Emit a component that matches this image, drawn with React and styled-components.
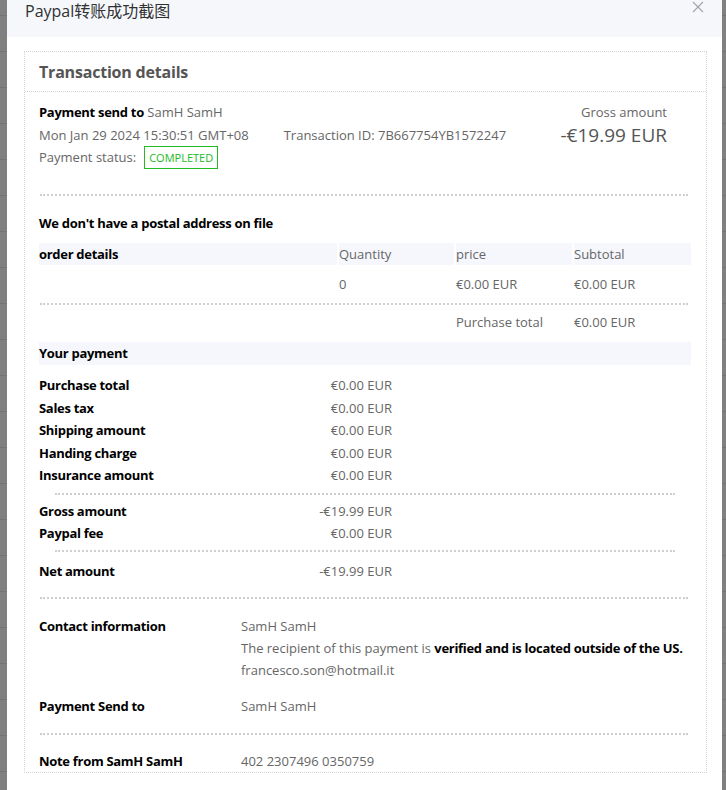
import React from "react";
import styled, { createGlobalStyle } from "styled-components";

const Global = createGlobalStyle`
  html, body { margin: 0; padding: 0; height: 100%; overflow: hidden; }
  body {
    background: #808080 repeating-linear-gradient(to bottom, transparent 0, transparent 15px, #747474 15px, #747474 16px, transparent 16px, transparent 36px);
    font-family: "Open Sans", "Noto Sans", "Noto Sans CJK SC", sans-serif;
    font-size: 13px;
    color: #666;
  }
`;

const Modal = styled.div`
  margin-left: 7px;
  width: 715px;
  height: 790px;
  background: #fff;
  box-sizing: border-box;
`;

const Header = styled.div`
  height: 37px;
  background: #f5f7fa;
  display: flex;
  justify-content: space-between;
  align-items: flex-start;
  padding: 0 18px 0 18px;
  box-sizing: border-box;
`;

const Title = styled.div`
  font-size: 16px;
  line-height: 22px;
  color: #303133;
  font-family: "Open Sans", "Noto Sans CJK SC", sans-serif;
`;

const Close = styled.div`
  padding-top: 1px;
  line-height: 0;
`;

const Body = styled.div`
  padding: 14px 15px 0 17px;
`;

const Card = styled.div`
  border: 1px dotted #d5d5d5;
  height: 722px;
  box-sizing: border-box;
  overflow: hidden;
`;

const CardHead = styled.div`
  height: 39px;
  display: flex;
  align-items: center;
  padding-left: 14px;
  font-size: 16px;
  font-weight: 700;
  color: #555;
  border-bottom: 1px dotted #d5d5d5;
  letter-spacing: -0.2px;
`;

const CardBody = styled.div`
  padding: 0 15px 0 14px;
`;

const Top = styled.div`
  display: flex;
  justify-content: space-between;
  padding-top: 9px;
  height: 93px;
  box-sizing: content-box;
`;

const Line = styled.div`
  line-height: 22.5px;
  display: flex;
  align-items: center;
  justify-content: ${(p) => (p.$end ? "flex-end" : "flex-start")};
  gap: ${(p) => p.$gap || 0}px;
`;

const Strong = styled.span`
  font-weight: 700;
  color: #000;
  letter-spacing: -0.3px;
`;

const Badge = styled.span`
  display: inline-block;
  border: 1px solid #22bb22;
  color: #22bb22;
  font-size: 11px;
  line-height: 21px;
  padding: 0 4px;
  margin-left: 8px;
`;

const Right = styled.div`
  text-align: right;
  padding-right: 24px;
`;

const Big = styled.div`
  font-size: 19px;
  line-height: 22px;
  color: #555;
`;

const Dots = styled.div`
  border-top: 2px dotted #cfcfcf;
  margin: ${(p) => p.$m || "0 3px 0 1px"};
`;

const SectionTitle = styled.div`
  font-weight: 700;
  color: #000;
  letter-spacing: -0.3px;
  line-height: ${(p) => (p.$shade ? "21px" : "22px")};
  padding: ${(p) => p.$pad || "0"};
  margin-top: ${(p) => p.$mt || 0}px;
  background: ${(p) => (p.$shade ? "#f6f7fd" : "transparent")};
`;

const OrderGrid = styled.div`
  display: grid;
  grid-template-columns: 298px 115px 116px 1fr;
  column-gap: 2px;
  align-items: center;
`;

const HeadCell = styled.div`
  background: #f6f7fd;
  line-height: 22px;
  color: ${(p) => (p.$bold ? "#000" : "#666")};
  font-weight: ${(p) => (p.$bold ? 700 : 400)};
  letter-spacing: ${(p) => (p.$bold ? "-0.3px" : "0")};
`;

const Cell = styled.div`
  line-height: ${(p) => p.$h || 38}px;
  min-height: ${(p) => p.$h || 38}px;
  color: #666;
`;

const PayList = styled.div`
  width: 353px;
  padding-top: ${(p) => p.$top || 0}px;
`;

const PayRow = styled.div`
  display: flex;
  justify-content: space-between;
  line-height: 22.5px;
`;

const Label = styled.span`
  font-weight: 700;
  color: #000;
  letter-spacing: -0.3px;
`;

const InfoRow = styled.div`
  display: grid;
  grid-template-columns: 202px 1fr;
  line-height: 22px;
  padding: ${(p) => p.$pad || "0"};
`;

const Values = styled.div`
  display: flex;
  flex-direction: column;
  color: #666;
  white-space: nowrap;
`;

const payRows1 = [
  ["Purchase total", "€0.00 EUR"],
  ["Sales tax", "€0.00 EUR"],
  ["Shipping amount", "€0.00 EUR"],
  ["Handing charge", "€0.00 EUR"],
  ["Insurance amount", "€0.00 EUR"],
];

export default function App() {
  return (
    <>
      <Global />
      <Modal>
        <Header>
          <Title>Paypal转账成功截图</Title>
          <Close>
            <svg width="12" height="12" viewBox="0 0 12 12">
              <path d="M1 1L11 11M11 1L1 11" stroke="#a0a4ab" strokeWidth="1.1" fill="none" />
            </svg>
          </Close>
        </Header>
        <Body>
          <Card>
            <CardHead>Transaction details</CardHead>
            <CardBody>
              <Top>
                <div>
                  <Line>
                    <Strong>Payment send to</Strong>&nbsp;SamH SamH
                  </Line>
                  <Line $gap={35}>
                    <span>Mon Jan 29 2024 15:30:51 GMT+08</span>
                    <span>Transaction ID: 7B667754YB1572247</span>
                  </Line>
                  <Line>
                    Payment status: <Badge>COMPLETED</Badge>
                  </Line>
                </div>
                <Right>
                  <Line $end>Gross amount</Line>
                  <Big>-€19.99 EUR</Big>
                </Right>
              </Top>
              <Dots />
              <SectionTitle $pad="16px 0 9px">We don't have a postal address on file</SectionTitle>
              <OrderGrid>
                <HeadCell $bold>order details</HeadCell>
                <HeadCell>Quantity</HeadCell>
                <HeadCell>price</HeadCell>
                <HeadCell>Subtotal</HeadCell>
                <Cell />
                <Cell>0</Cell>
                <Cell>€0.00 EUR</Cell>
                <Cell>€0.00 EUR</Cell>
              </OrderGrid>
              <Dots />
              <OrderGrid>
                <Cell $h={34} />
                <Cell $h={34} />
                <Cell $h={34}>Purchase total</Cell>
                <Cell $h={34}>€0.00 EUR</Cell>
              </OrderGrid>
              <SectionTitle $shade $pad="1px 0" $mt={3}>
                Your payment
              </SectionTitle>
              <PayList $top={9}>
                {payRows1.map(([l, v]) => (
                  <PayRow key={l}>
                    <Label>{l}</Label>
                    <span>{v}</span>
                  </PayRow>
                ))}
              </PayList>
              <Dots $m="6px 16px 5px 16px" />
              <PayList>
                <PayRow>
                  <Label>Gross amount</Label>
                  <span>-€19.99 EUR</span>
                </PayRow>
                <PayRow>
                  <Label>Paypal fee</Label>
                  <span>€0.00 EUR</span>
                </PayRow>
              </PayList>
              <Dots $m="5px 16px 5px 16px" />
              <PayList $top={3}>
                <PayRow>
                  <Label>Net amount</Label>
                  <span>-€19.99 EUR</span>
                </PayRow>
              </PayList>
              <Dots $m="15px 3px 0 1px" />
              <InfoRow $pad="16px 0 0">
                <Label>Contact information</Label>
                <Values>
                  <span>SamH SamH</span>
                  <span>
                    The recipient of this payment is <Strong>verified and is located outside of the US.</Strong>
                  </span>
                  <span>francesco.son@hotmail.it</span>
                </Values>
              </InfoRow>
              <InfoRow $pad="14px 0 16px">
                <Label>Payment Send to</Label>
                <Values>
                  <span>SamH SamH</span>
                </Values>
              </InfoRow>
              <Dots />
              <InfoRow $pad="15px 0 0">
                <Label>Note from SamH SamH</Label>
                <Values>
                  <span>402 2307496 0350759</span>
                </Values>
              </InfoRow>
            </CardBody>
          </Card>
        </Body>
      </Modal>
    </>
  );
}
